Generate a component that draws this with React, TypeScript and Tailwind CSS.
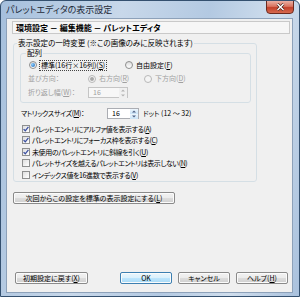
import React from "react";

const jp = "font-['Noto_Sans_CJK_JP',sans-serif] [font-feature-settings:'palt']";

function Acc({ k }: { k: string }) {
  return (
    <>
      (<span className="underline underline-offset-[1px]">{k}</span>)
    </>
  );
}

function Radio({ checked, disabled }: { checked?: boolean; disabled?: boolean }) {
  return (
    <span
      className={`flex h-[8px] w-[8px] shrink-0 items-center justify-center rounded-full border ${
        disabled ? "border-[#b8b8b8] bg-[#f4f4f4]" : "border-[#8e8f8f] bg-[linear-gradient(#dcdcdc,#ffffff)]"
      }`}
    >
      {checked && (
        <span
          className={`h-[4px] w-[4px] rounded-full ${
            disabled ? "bg-[#a8a8a8]" : "bg-[radial-gradient(circle_at_35%_35%,#8ad0ff,#1a5fb4)]"
          }`}
        />
      )}
    </span>
  );
}

function Check({ checked }: { checked?: boolean }) {
  return (
    <span className="flex h-[8px] w-[8px] shrink-0 items-center justify-center border border-[#8e8f8f] bg-[linear-gradient(135deg,#dedede,#ffffff)]">
      {checked && (
        <svg width="6" height="6" viewBox="0 0 6 6">
          <path d="M0.6 3.1 L2.3 4.8 L5.4 0.9" fill="none" stroke="#3a4fa0" strokeWidth="1.3" />
        </svg>
      )}
    </span>
  );
}

function Spin({ value, disabled, w }: { value: string; disabled?: boolean; w: string }) {
  return (
    <div
      className={`flex h-[11px] ${w} items-stretch border ${
        disabled ? "border-[#c5c5c5] bg-[#f7f7f7] text-[#a0a0a0]" : "border-[#abadb3] bg-white text-black"
      }`}
    >
      <span className="flex-1 pl-[4px] leading-[9px]">{value}</span>
      <div className="flex w-[8px] flex-col">
        {["M1 3.5 L3 1.5 L5 3.5", "M1 1.5 L3 3.5 L5 1.5"].map((d) => (
          <span
            key={d}
            className={`flex flex-1 items-center justify-center ${
              disabled ? "bg-[#f0f0f0]" : "bg-[linear-gradient(#eef6fd,#c9e3f7)]"
            }`}
          >
            <svg width="6" height="5" viewBox="0 0 6 5">
              <path d={d} fill={disabled ? "#b4b4b4" : "#4d6185"} />
            </svg>
          </span>
        ))}
      </div>
    </div>
  );
}

function Btn({ children, w, primary }: { children: React.ReactNode; w: string; primary?: boolean }) {
  return (
    <button
      className={`flex h-[12px] ${w} items-center justify-center rounded-[2px] border leading-none ${
        primary
          ? "border-[#3c7fb1] bg-[linear-gradient(#eaf6fd_0%,#d9f0fc_50%,#bee6fd_50%,#a7d9f5_100%)]"
          : "border-[#8a8a8a] bg-[linear-gradient(#f2f2f2_0%,#ebebeb_50%,#dddddd_50%,#cfcfcf_100%)]"
      } shadow-[inset_0_0_0_1px_#fbfbfb]`}
    >
      {children}
    </button>
  );
}

export default function App() {
  const checks: [string, string, boolean][] = [
    ["パレットエントリにアルファ値を表示する", "A", true],
    ["パレットエントリにフォーカス枠を表示する", "C", true],
    ["未使用のパレットエントリに斜線を引く", "U", true],
    ["パレットサイズを越えるパレットエントリは表示しない", "N", false],
    ["インデックス値を16進数で表示する", "V", false],
  ];

  return (
    <div
      className={`relative flex h-[297px] w-[300px] flex-col overflow-hidden rounded-t-[6px] border border-[#34506f] bg-[linear-gradient(100deg,#a5bfdc_0%,#c8d8ea_35%,#b3c9e2_60%,#d0deed_80%,#a9c1dd_100%)] text-[7px] text-black ${jp}`}
    >
      {/* title bar */}
      <div className="flex h-[17px] items-center pl-[5px] text-[9px] leading-none text-[#1e2a38]">
        パレットエディタの表示設定
      </div>
      <div className="absolute right-[5px] top-[-1px] flex h-[14px] w-[28px] items-center justify-center rounded-b-[4px] border border-[#6b2a1f] bg-[linear-gradient(#eab0a4_0%,#d9735f_45%,#c2402a_55%,#d66a4f_100%)]">
        <svg width="9" height="8" viewBox="0 0 9 8">
          <path d="M1.5 1 L7.5 7 M7.5 1 L1.5 7" stroke="#3a1a14" strokeWidth="2.6" />
          <path d="M1.5 1 L7.5 7 M7.5 1 L1.5 7" stroke="#ffffff" strokeWidth="1.5" />
        </svg>
      </div>

      {/* client area */}
      <div className="mb-[3px] ml-[5px] mr-[6px] flex flex-1 flex-col border border-[#8da1b9] bg-[#f0f0f0]">
        <div className="ml-[5px] mt-[2px] flex h-[13px] w-[278px] items-center border border-[#c9c9c9] bg-[#f6f6f6] pl-[3px] text-[8px] font-bold leading-none">
          環境設定 － 編集機能 － パレットエディタ
        </div>

        <fieldset className="ml-[6px] mt-[4px] h-[144px] w-[244px] rounded-[3px] border border-[#d5dfe5] px-0 pb-0">
          <legend className="ml-[3px] px-[1px] text-[7.5px] leading-[10px]">
            表示設定の一時変更 (※この画像のみに反映されます)
          </legend>

          <fieldset className="ml-[6px] h-[55px] w-[231px] rounded-[3px] border border-[#d5dfe5]">
            <legend className="ml-[5px] px-[1px] text-[7.5px] leading-[10px]">配列</legend>
            <div className="flex h-[14px] items-center pl-[8px]">
              <div className="flex w-[96px] items-center gap-[2px]">
                <Radio checked />
                <span className="border border-dotted border-[#444] px-[1px] leading-[9px]">
                  標準(16行×16列)<Acc k="S" />
                </span>
              </div>
              <div className="flex items-center gap-[3px]">
                <Radio />
                <span>
                  自由設定<Acc k="F" />
                </span>
              </div>
            </div>
            <div className="flex h-[13px] items-center pl-[7px] text-[#a0a0a0]">
              <span className="w-[60px]">並び方向：</span>
              <div className="flex w-[56px] items-center gap-[3px]">
                <Radio checked disabled />
                <span>
                  右方向<Acc k="R" />
                </span>
              </div>
              <div className="flex items-center gap-[3px]">
                <Radio disabled />
                <span>
                  下方向<Acc k="D" />
                </span>
              </div>
            </div>
            <div className="flex h-[14px] items-center pl-[7px] text-[#a0a0a0]">
              <span className="w-[60px]">
                折り返し幅<Acc k="W" />：
              </span>
              <Spin value="16" disabled w="w-[40px]" />
            </div>
          </fieldset>

          <div className="mt-[5px] flex h-[11px] items-center pl-[7px]">
            <span className="w-[86px] tracking-[-0.4px]">
              マトリックスサイズ<Acc k="M" />：
            </span>
            <Spin value="16" w="w-[32px]" />
            <span className="ml-[4px]">ドット (12 ～ 32)</span>
          </div>

          <div className="mt-[4px] flex flex-col pl-[8px]">
            {checks.map(([label, k, on]) => (
              <div key={k} className="flex h-[11.5px] items-center gap-[2px]">
                <Check checked={on} />
                <span className="tracking-[-0.4px]">
                  {label}
                  <Acc k={k} />
                </span>
              </div>
            ))}
          </div>
        </fieldset>

        <div className="ml-[6px] mt-[10px]">
          <Btn w="w-[162px]">
            次回からこの設定を標準の表示設定にする<Acc k="L" />
          </Btn>
        </div>

        <div className="mb-[8px] mt-auto flex items-center pl-[8px] pr-[4px]">
          <Btn w="w-[73px]">
            初期設定に戻す<Acc k="X" />
          </Btn>
          <div className="ml-auto flex gap-[6px]">
            <Btn w="w-[52px]" primary>
              OK
            </Btn>
            <Btn w="w-[52px]">キャンセル</Btn>
            <Btn w="w-[52px]">
              ヘルプ<Acc k="H" />
            </Btn>
          </div>
        </div>
      </div>
    </div>
  );
}
